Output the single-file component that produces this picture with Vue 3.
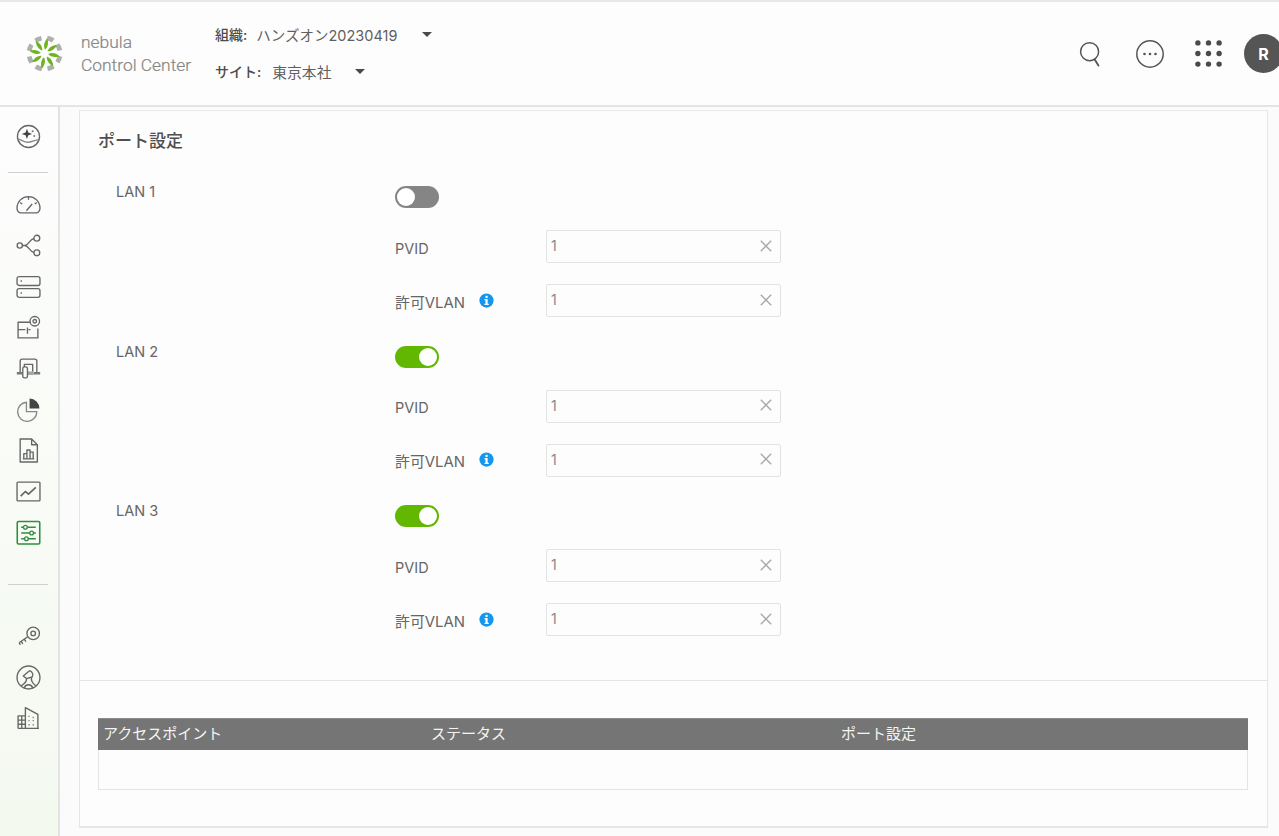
<script setup>
const ports = [
  { name: 'LAN 1', on: false },
  { name: 'LAN 2', on: true },
  { name: 'LAN 3', on: true }
]
const petals = Array.from({ length: 8 }, (_, i) => i * 45)
const columns = [
  { label: 'アクセスポイント', width: '328px' },
  { label: 'ステータス', width: '410px' },
  { label: 'ポート設定', width: 'auto' }
]
</script>

<template>
  <div class="page">
    <header class="topbar">
      <div class="brand">
        <svg class="logo" viewBox="-20 -20 40 40" aria-hidden="true">
          <g v-for="a in petals" :key="'g' + a" :transform="`rotate(${a + 22})`">
            <path d="M-4 -19 A19.5 19.5 0 0 1 4 -19 L3 -14 A14 14 0 0 0 -3 -14 Z" fill="#adb0ad" />
          </g>
          <g v-for="a in petals" :key="'l' + a" :transform="`rotate(${a + 8})`">
            <path d="M0 -4 C2.6 -7 3 -11 0.8 -17 C-2.2 -12 -2.6 -8 0 -4 Z" fill="#6cb51f" />
          </g>
        </svg>
        <div class="brand-text">
          <div>nebula</div>
          <div>Control Center</div>
        </div>
      </div>
      <div class="selectors">
        <div class="selector">
          <span class="sel-label">組織:</span>
          <span class="sel-value org">ハンズオン20230419</span>
          <span class="caret"></span>
        </div>
        <div class="selector">
          <span class="sel-label">サイト:</span>
          <span class="sel-value site">東京本社</span>
          <span class="caret"></span>
        </div>
      </div>
      <div class="top-actions">
        <svg class="top-icon" viewBox="0 0 28 28" aria-hidden="true">
          <circle cx="12.5" cy="11.5" r="9.7" fill="none" stroke="#555" stroke-width="1.6" />
          <path d="M18 20 L22 26.5" stroke="#555" stroke-width="2" fill="none" stroke-linecap="round" />
        </svg>
        <svg class="top-icon" viewBox="0 0 28 28" aria-hidden="true">
          <circle cx="14" cy="14" r="13.2" fill="none" stroke="#555" stroke-width="1.5" />
          <circle cx="8.5" cy="14" r="1.3" fill="#555" />
          <circle cx="14" cy="14" r="1.3" fill="#555" />
          <circle cx="19.5" cy="14" r="1.3" fill="#555" />
        </svg>
        <svg class="top-icon" viewBox="0 0 28 28" aria-hidden="true">
          <g fill="#4a4a4a">
            <circle cx="3" cy="3" r="2.8" /><circle cx="14" cy="3" r="2.8" /><circle cx="25" cy="3" r="2.8" />
            <circle cx="3" cy="14" r="2.8" /><circle cx="14" cy="14" r="2.8" /><circle cx="25" cy="14" r="2.8" />
            <circle cx="3" cy="25" r="2.8" /><circle cx="14" cy="25" r="2.8" /><circle cx="25" cy="25" r="2.8" />
          </g>
        </svg>
        <div class="avatar">R</div>
      </div>
    </header>

    <div class="body">
      <aside class="sidebar">
        <svg class="nav i-first" viewBox="0 0 24 24" aria-hidden="true">
          <circle cx="12" cy="12" r="10.6" />
          <path d="M10.5 4.5 L11.8 8.2 L15.5 9.5 L11.8 10.8 L10.5 14.5 L9.2 10.8 L5.5 9.5 L9.2 8.2 Z" fill="#444" stroke="none" />
          <path d="M2.2 14.5 C6 15.5 8 18 12 17.5 C16 17 18 15.5 21.8 15" stroke="#888" />
          <circle cx="16" cy="7" r="1" fill="#777" stroke="none" />
          <circle cx="17.5" cy="11.5" r="0.9" fill="#777" stroke="none" />
        </svg>
        <div class="rule rule-a"></div>
        <svg class="nav i-gauge" viewBox="0 0 24 24" aria-hidden="true">
          <path d="M4 20 H20 C21.5 20 23 18 23 15.5 C23 9 18 4.5 12 4.5 C6 4.5 1 9 1 15.5 C1 18 2.5 20 4 20 Z" />
          <path d="M10 18 L15.5 11.5 M12 4.5 V7.5 M4 10 L6 11.5 M20 10 L18 11.5" />
        </svg>
        <svg class="nav" viewBox="0 0 24 24" aria-hidden="true">
          <circle cx="3.6" cy="12" r="2.5" /><circle cx="20" cy="5" r="2.8" /><circle cx="20" cy="19" r="2.8" />
          <path d="M6 12 H8.5 C12 12 13 6 17.3 5.3 M8.5 12 C12 12 13 18 17.3 18.7" />
        </svg>
        <svg class="nav" viewBox="0 0 24 24" aria-hidden="true">
          <rect x="1" y="2.5" width="22" height="8.5" rx="2" />
          <rect x="1" y="14" width="22" height="8.5" rx="2" />
          <path d="M4.5 6.7 H5.5 M4.5 18.2 H5.5" stroke-width="1.8" />
        </svg>
        <svg class="nav" viewBox="0 0 24 24" aria-hidden="true">
          <path d="M14 7 H2 V22 H21 V13" />
          <path d="M2 14 H9 M12 14 H14 M11 12 V18" />
          <circle cx="18" cy="6" r="4.6" /><circle cx="18" cy="6" r="1.7" />
        </svg>
        <svg class="nav" viewBox="0 0 24 24" aria-hidden="true">
          <path d="M4 17 V5 C4 3.8 4.8 3 6 3 H18 C19.2 3 20 3.8 20 5 V17" />
          <path d="M8 12 V8 H16 V15" />
          <path d="M0.8 16.5 H6 M17 16.5 H23.2" stroke-width="2.4" stroke="#777" />
          <path d="M10 16.5 H17" stroke-width="3.4" stroke="#a5a5a5" />
          <rect x="6.5" y="10.5" width="4.5" height="10.5" rx="1.6" fill="#fbfdf9" />
        </svg>
        <svg class="nav" viewBox="0 0 24 24" aria-hidden="true">
          <path d="M10 5 A9.2 9.2 0 1 0 20 14 H10 Z" stroke="#888" />
          <path d="M13 1.5 A9.5 9.5 0 0 1 22.5 11 H13 Z" fill="#444" stroke="none" />
        </svg>
        <svg class="nav" viewBox="0 0 24 24" aria-hidden="true">
          <path d="M4 1 H15 L20.5 6.5 V23 H4 Z M15 1 V6.5 H20.5" />
          <path d="M7.5 20 V15 H10.5 V20 M10.5 20 V11.5 H13.5 V20 M13.5 20 V13.5 H16.5 V20 M6.5 20 H17.5" />
        </svg>
        <svg class="nav" viewBox="0 0 24 24" aria-hidden="true">
          <rect x="1" y="3" width="22" height="18" rx="0.8" />
          <path d="M4.5 16.5 L9 12 L12 14.5 L19 8" stroke-width="1.6" />
        </svg>
        <svg class="nav active" viewBox="0 0 24 24" aria-hidden="true">
          <rect x="1.2" y="1.5" width="21.6" height="21.6" rx="1.2" stroke-width="1.5" />
          <path d="M5 7 H19 M5 12.5 H19 M5 18 H19" />
          <circle cx="9" cy="7" r="1.8" fill="#fbfdf9" />
          <circle cx="15" cy="12.5" r="1.8" fill="#fbfdf9" />
          <circle cx="10" cy="18" r="1.8" fill="#fbfdf9" />
        </svg>
        <div class="rule rule-b"></div>
        <svg class="nav i-key" viewBox="0 0 24 24" aria-hidden="true">
          <circle cx="16.5" cy="9" r="6" /><circle cx="16.5" cy="9" r="2.2" />
          <path d="M11.5 12 L3 18 M5 16.5 L6.5 19 M8 14.5 L9.5 17 M3 18 L4.2 20" />
        </svg>
        <svg class="nav" viewBox="0 0 24 24" aria-hidden="true">
          <circle cx="12" cy="12" r="11" />
          <path d="M7 10.5 L13 5.5 C16 6.5 17 9.5 15.5 11.5 L10 13 Z" />
          <path d="M10 13 C10.5 15.5 8 18 5 20 M15 12 C14 15.5 16.5 18 19 20 M8 22 C9 18 15 18 16 22" />
        </svg>
        <svg class="nav" viewBox="0 0 24 24" aria-hidden="true">
          <path d="M9 21.5 V1.5 L21 8 V21.5" />
          <path d="M2 21.5 H22 M2 21.5 V9.5 H9 M2 13.5 H9 M2 17.5 H9 M5.5 9.5 V21.5" />
          <path d="M12 10 H13.5 M16 11 H17.5 M12 14 H13.5 M16 14 H17.5 M12 18 H13.5 M16 18 H17.5" stroke-dasharray="1 1" />
        </svg>
      </aside>

      <main class="main">
        <div class="card">
          <section class="settings">
            <h2 class="title">ポート設定</h2>
            <div v-for="port in ports" :key="port.name" class="port">
              <div class="port-name">{{ port.name }}</div>
              <div class="port-fields">
                <div class="switch" :class="{ on: port.on }"><span class="knob"></span></div>
                <div class="field field-pvid">
                  <label class="field-label">PVID</label>
                  <div class="input">
                    <span>1</span>
                    <svg class="clear" viewBox="0 0 12 12" aria-hidden="true"><path d="M0.8 0.8 L11.2 11.2 M11.2 0.8 L0.8 11.2" /></svg>
                  </div>
                </div>
                <div class="field field-vlan">
                  <label class="field-label vlan-label">
                    <span>許可VLAN</span>
                    <svg class="info" viewBox="0 0 16 16" aria-hidden="true">
                      <circle cx="8" cy="8" r="7.6" fill="#1296f0" />
                      <rect x="6.9" y="3" width="2.3" height="2.3" fill="#fff" />
                      <path d="M5.8 6.5 H9.2 V11.5 H10.4 V12.8 H5.8 V11.5 H6.9 V7.8 H5.8 Z" fill="#fff" />
                    </svg>
                  </label>
                  <div class="input">
                    <span>1</span>
                    <svg class="clear" viewBox="0 0 12 12" aria-hidden="true"><path d="M0.8 0.8 L11.2 11.2 M11.2 0.8 L0.8 11.2" /></svg>
                  </div>
                </div>
              </div>
            </div>
          </section>
          <section class="table-wrap">
            <div class="table">
              <div class="thead">
                <div v-for="c in columns" :key="c.label" class="th" :style="{ width: c.width }">{{ c.label }}</div>
              </div>
              <div class="tbody"></div>
            </div>
          </section>
        </div>
      </main>
    </div>
  </div>
</template>

<style>
html, body { margin: 0; background: #fbfbfb; }
</style>

<style scoped>
.page {
  width: 1279px;
  height: 836px;
  overflow: hidden;
  display: flex;
  flex-direction: column;
  background: #fbfbfb;
  color: #555;
  font-family: Inter, "Noto Sans CJK JP", sans-serif;
  box-sizing: border-box;
  border-top: 2px solid #e8e8e8;
}
.topbar {
  height: 103px;
  flex: none;
  display: flex;
  align-items: center;
  background: #fdfdfd;
  border-bottom: 2px solid #e4e4e4;
  padding-left: 26px;
  box-sizing: content-box;
}
.brand { display: flex; align-items: center; width: 189px; }
.logo { width: 37px; height: 37px; margin-right: 18px; }
.brand-text {
  font-family: Roboto, sans-serif;
  font-size: 17.4px;
  line-height: 23px;
  color: #858585;
  font-weight: 300;
  white-space: nowrap;
  padding-top: 1px;
  -webkit-text-stroke: 0.2px #858585;
}
.selectors { display: flex; flex-direction: column; gap: 17px; margin-bottom: 2px; }
.selector { display: flex; align-items: center; height: 20px; font-size: 14px; white-space: nowrap; }
.sel-label { font-weight: 500; color: #4c4c4c; margin-right: 9px; }
.selector:nth-child(2) .sel-label { margin-right: 11px; }
.sel-value { color: #5f5f5f; font-weight: 400; }
.org { font-size: 14.5px; width: 166px; }
.site { width: 83px; font-size: 14.8px; }
.caret {
  width: 0;
  height: 0;
  border-left: 5px solid transparent;
  border-right: 5px solid transparent;
  border-top: 5px solid #4a4a4a;
}
.top-actions { margin-left: auto; display: flex; align-items: center; }
.top-icon { width: 28px; height: 28px; margin-right: 32px; flex: none; }
.top-icon:nth-child(1) { width: 26px; height: 26px; margin-right: 32px; }
.top-icon:nth-child(3) { margin-right: 22px; margin-left: -1px; width: 27px; height: 27px; }
.avatar {
  width: 39px;
  height: 39px;
  margin-right: -4px;
  border-radius: 50%;
  background: #555;
  color: #fff;
  font-size: 16px;
  font-weight: 700;
  display: flex;
  align-items: center;
  justify-content: center;
}
.body { flex: 1; display: flex; min-height: 0; }
.sidebar {
  width: 56px;
  padding-right: 2px;
  flex: none;
  display: flex;
  flex-direction: column;
  align-items: center;
  padding-top: 17px;
  box-sizing: content-box;
  border-right: 2px solid #e2e4e1;
  background: linear-gradient(#fdfdfd 0%, #f4f9f0 100%);
}
.nav {
  width: 25px;
  height: 25px;
  margin-bottom: 16px;
  flex: none;
  fill: none;
  stroke: #666;
  stroke-width: 1.3;
  stroke-linejoin: round;
}
.nav.active { stroke: #2f8f3a; }
.i-first { margin-bottom: 0; }
.rule { width: 40px; height: 1px; background: #cfd1cf; flex: none; }
.rule-a { margin: 23px 0 19px; }
.rule-b { margin: 23px 0 39px; }
.main { flex: 1; padding: 3px 11px 8px 19px; min-width: 0; }
.card {
  height: 100%;
  box-sizing: border-box;
  background: #fdfdfd;
  border: 1px solid #e6e6e6;
  border-bottom-width: 2px;
  border-top: 1px solid #eaeaea;
}
.settings { padding: 20px 18px 0; box-sizing: border-box; border-bottom: 1px solid #e4e4e4; height: 570px; }
.title { margin: 0 0 35px; font-size: 17px; line-height: 20px; font-weight: 500; color: #4f4f4f; }
.port { display: flex; height: 159.5px; }
.port-name { width: 297px; padding-left: 18px; box-sizing: border-box; font-size: 14.5px; line-height: 20px; color: #666; font-weight: 400; margin-top: -4px; }
.port-fields { flex: 1; }
.switch {
  width: 44px;
  height: 22px;
  border-radius: 11px;
  background: #858585;
  box-sizing: border-box;
  padding: 2px;
  display: flex;
}
.switch.on { background: #62b800; justify-content: flex-end; }
.knob { width: 18px; height: 18px; border-radius: 50%; background: #fff; }
.field { display: flex; align-items: center; }
.field-pvid { margin-top: 22px; }
.field-vlan { margin-top: 21px; }
.field-label { width: 151px; font-size: 14.5px; color: #666; font-weight: 400; display: flex; align-items: center; padding-top: 3px; box-sizing: border-box; }
.vlan-label { padding-top: 1px; }
.vlan-label span { width: 84px; white-space: nowrap; font-size: 14.9px; }
.info { width: 15px; height: 15px; margin-top: -2px; }
.input {
  width: 235px;
  height: 33px;
  box-sizing: border-box;
  border: 1px solid #e3e3e3;
  border-radius: 2px;
  background: #fdfdfd;
  padding: 0 8px 2px 4px;
  display: flex;
  align-items: center;
  justify-content: space-between;
  font-size: 14px;
  color: #8a8a8a;
}
.clear { width: 12px; height: 12px; fill: none; stroke: #a8a8a8; stroke-width: 1.4; }
.table-wrap { padding: 37px 19px 0 18px; }
.table { border: 1px solid #e4e4e4; border-top: 0; }
.thead {
  height: 32px;
  background: #757575;
  display: flex;
  align-items: center;
  color: #f4f4f4;
  font-size: 15px;
  padding: 0 0 4px 5px;
  margin: 0 -1px;
  border-top: 1px solid #8c8c8c;
  box-sizing: border-box;
}
.th { white-space: nowrap; flex: none; }
.tbody { height: 39px; background: #fdfdfd; }
</style>
